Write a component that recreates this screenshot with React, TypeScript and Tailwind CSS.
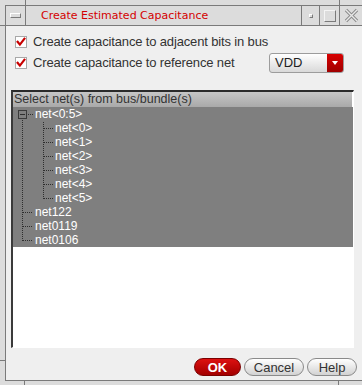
import React from "react";

const Check = () => (
  <svg width="12" height="12" viewBox="0 0 12 12" className="shrink-0">
    <rect x="0.5" y="0.5" width="11" height="11" fill="#ffffff" stroke="#a8a8a8" />
    <path d="M2.6 5.8 L4.9 8.6 L9.4 2.8" fill="none" stroke="#c80000" strokeWidth="2.2" strokeLinecap="square" />
  </svg>
);

const rows = [
  { t: "net<0:5>", lvl: 0 },
  { t: "net<0>", lvl: 1 },
  { t: "net<1>", lvl: 1 },
  { t: "net<2>", lvl: 1 },
  { t: "net<3>", lvl: 1 },
  { t: "net<4>", lvl: 1 },
  { t: "net<5>", lvl: 1 },
  { t: "net122", lvl: 0 },
  { t: "net0119", lvl: 0 },
  { t: "net0106", lvl: 0 },
];

function dots(x1: number, y1: number, x2: number, y2: number) {
  const out: React.ReactNode[] = [];
  if (y1 === y2) {
    for (let x = x1; x <= x2; x += 2) out.push(<rect key={`h${x}-${y1}`} x={x} y={y1} width="1" height="1" />);
  } else {
    for (let y = y1; y <= y2; y += 2) out.push(<rect key={`v${x1}-${y}`} x={x1} y={y} width="1" height="1" />);
  }
  return out;
}

export default function App() {
  const RH = 14;
  const c = (i: number) => i * RH + 7;
  return (
    <div
      className="relative w-[362px] h-[385px] bg-[#dcdcdc] overflow-hidden"
      style={{ fontFamily: '"Liberation Sans", Arial, sans-serif' }}
    >
      {/* resize handle ticks */}
      <div className="absolute left-[25px] top-0 w-px h-[6px] bg-[#7a7a7a]" />
      <div className="absolute left-[339px] top-0 w-px h-[6px] bg-[#7a7a7a]" />
      <div className="absolute left-0 top-[25px] w-[6px] h-px bg-[#7a7a7a]" />
      <div className="absolute left-0 top-[360px] w-[6px] h-px bg-[#7a7a7a]" />
      <div className="absolute left-[24px] top-[380px] w-px h-[5px] bg-[#7a7a7a]" />
      <div className="absolute left-[338px] top-[380px] w-px h-[5px] bg-[#7a7a7a]" />

      <div className="flex flex-col h-full pt-[5px] pl-[5px] pb-[4px]">
        <div className="flex flex-col flex-1 border-l border-t border-b border-[#7a7a7a]">
          {/* title bar */}
          <div className="flex h-[20px] border-b border-[#7a7a7a] bg-[#dcdcdc] shrink-0">
            <div className="w-[20px] h-full border-r border-[#7a7a7a] flex items-center justify-center">
              <div className="w-[11px] h-[5px] border border-t-white border-l-white border-b-[#7a7a7a] border-r-[#7a7a7a] bg-[#dcdcdc]" />
            </div>
            <div
              className="flex-1 flex items-center pl-[15px] text-[11px] text-[#d40000] leading-none"
              style={{ fontFamily: '"DejaVu Sans", sans-serif' }}
            >
              Create Estimated Capacitance
            </div>
            <div className="w-[18px] h-full border-l border-[#7a7a7a] flex items-center justify-center">
              <div className="w-[4px] h-[4px] border border-t-white border-l-white border-b-[#7a7a7a] border-r-[#7a7a7a]" />
            </div>
            <div className="w-[20px] h-full border-l border-[#7a7a7a] flex items-center justify-center">
              <div className="w-[12px] h-[12px] border border-t-[#f4f4f4] border-l-[#f4f4f4] border-b-[#7a7a7a] border-r-[#7a7a7a]" />
            </div>
            <div className="w-[23px] h-full border-l border-[#7a7a7a] flex items-center justify-center">
              <svg width="15" height="15" viewBox="0 0 15 15">
                <path d="M2 2 L13 13 M13 2 L2 13" stroke="#8a8a8a" strokeWidth="3.2" />
                <path d="M2 2 L13 13 M13 2 L2 13" stroke="#e8e8e8" strokeWidth="1.4" />
              </svg>
            </div>
          </div>

          {/* content */}
          <div className="flex-1 flex flex-col bg-[#efefef] text-[13px] text-[#333333]">
            <div className="flex items-center h-[19px] mt-[6px] pl-[9px] gap-[6px]">
              <Check />
              <span className="tracking-[-0.15px]">Create capacitance to adjacent bits in bus</span>
            </div>
            <div className="flex items-center h-[21px] mt-[1px] pl-[9px] gap-[6px]">
              <Check />
              <span className="flex-1 tracking-[-0.15px]">Create capacitance to reference net</span>
              <div className="flex w-[75px] h-[20px] mr-[18px] rounded-[3px] border border-[#9c9c9c] overflow-hidden bg-gradient-to-b from-white to-[#d9d9d9]">
                <div className="flex-1 flex items-center pl-[5px] text-[13px] text-[#222]">VDD</div>
                <div className="w-[16px] h-full bg-gradient-to-b from-[#d80000] to-[#a00000] flex items-center justify-center">
                  <svg width="6" height="4" viewBox="0 0 6 4">
                    <path d="M0 0 H6 L3 4 Z" fill="#ffffff" />
                  </svg>
                </div>
              </div>
            </div>

            {/* list box */}
            <div className="mt-[17px] ml-[5px] mr-[8px] h-[258px] flex flex-col border-t-2 border-l-2 border-t-[#2a2a2a] border-l-[#3a3a3a] border-r border-b border-r-white border-b-white bg-white">
              <div className="h-[15px] flex items-center pl-[1px] text-[12.5px] text-[#333] bg-gradient-to-b from-[#c6c6c6] to-[#a9a9a9] mr-[1px] leading-none">
                Select net(s) from bus/bundle(s)
              </div>
              <div className="relative bg-[#7f7f7f] text-white text-[12px]">
                <svg className="absolute left-0 top-0" width="60" height={RH * 10} fill="#2e2e2e">
                  {/* expander box */}
                  <rect x="5.5" y="3.5" width="8" height="8" fill="none" stroke="#3a3a3a" />
                  <rect x="7" y="7" width="5" height="1" fill="#2e2e2e" />
                  {dots(15, c(0), 19, c(0))}
                  {dots(9, 13, 9, c(9))}
                  {dots(30, 15, 30, c(6))}
                  {[1, 2, 3, 4, 5, 6].map((i) => dots(31, c(i), 39, c(i)))}
                  {[7, 8, 9].map((i) => dots(10, c(i), 19, c(i)))}
                </svg>
                {rows.map((r, i) => (
                  <div
                    key={i}
                    className={`h-[14px] flex items-center leading-none ${r.lvl === 0 ? "pl-[22px]" : "pl-[42px]"}`}
                  >
                    {r.t}
                  </div>
                ))}
              </div>
            </div>

            {/* buttons */}
            <div className="flex justify-end gap-[3px] mt-[10px] mr-[5px] h-[18px]">
              <button className="w-[47px] h-[18px] rounded-[9px] border border-[#7a0000] bg-gradient-to-b from-[#dd1111] to-[#a30000] text-white font-bold text-[13px] leading-none">
                OK
              </button>
              <button className="w-[60px] h-[18px] rounded-[9px] border border-[#8a8a8a] bg-gradient-to-b from-white to-[#d2d2d2] text-[#333] text-[13px] leading-none">
                Cancel
              </button>
              <button className="w-[50px] h-[18px] rounded-[9px] border border-[#8a8a8a] bg-gradient-to-b from-white to-[#d2d2d2] text-[#333] text-[13px] leading-none">
                Help
              </button>
            </div>
          </div>
        </div>
      </div>
    </div>
  );
}
